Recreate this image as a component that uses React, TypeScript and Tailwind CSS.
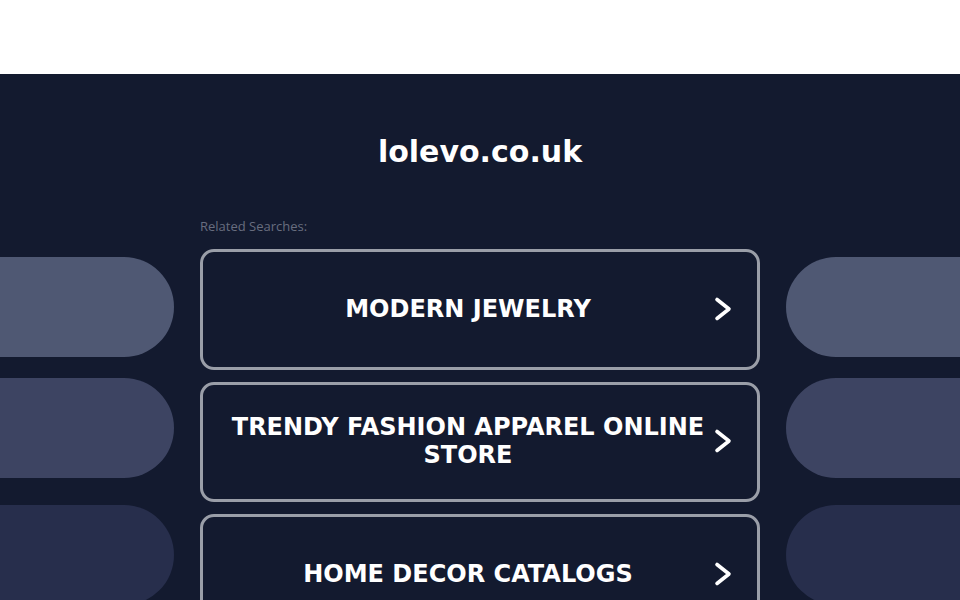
import React from "react";

const items = ["MODERN JEWELRY", "TRENDY FASHION APPAREL ONLINE STORE", "HOME DECOR CATALOGS"];

function Chevron() {
  return (
    <svg width="20" height="28" viewBox="0 0 20 28" className="shrink-0">
      <polyline points="4,4.5 16,14 4,23.5" fill="none" stroke="#ffffff" strokeWidth="3.6" strokeLinecap="round" strokeLinejoin="round" />
    </svg>
  );
}

export default function App() {
  return (
    <div className="h-[600px] w-full overflow-hidden bg-[#131a2f]" style={{ fontFamily: "'DejaVu Sans', sans-serif" }}>
      <div className="h-[74px] bg-white" />
      <div className="flex flex-col">
        <h1 className="pt-[60px] text-center text-[30px] leading-[36px] font-bold text-white">lolevo.co.uk</h1>
        <div className="mt-[48px] flex">
          <div className="flex w-[174px] flex-col">
            <div className="mt-[39px] h-[100px] rounded-r-full bg-[#4f5873]" />
            <div className="mt-[21px] h-[100px] rounded-r-full bg-[#3d4462]" />
            <div className="mt-[27px] h-[100px] rounded-r-full bg-[#272e4c]" />
          </div>
          <div className="ml-[26px] flex w-[560px] flex-col">
            <div className="text-[13px] leading-[16px] text-[#686d7f]" style={{ fontFamily: "'Open Sans', sans-serif" }}>
              Related Searches:
            </div>
            <div className="mt-[15px] flex flex-col gap-3">
              {items.map((t) => (
                <div key={t} className="flex h-[120.5px] items-center rounded-[14px] border-[3px] border-[#9a9ea8] pb-[1px] pl-5 pr-6">
                  <span className="flex-1 text-center text-[24px] leading-[28px] font-bold text-white">{t}</span>
                  <Chevron />
                </div>
              ))}
            </div>
          </div>
          <div className="ml-[26px] flex flex-1 flex-col">
            <div className="mt-[39px] h-[100px] rounded-l-full bg-[#4f5873]" />
            <div className="mt-[21px] h-[100px] rounded-l-full bg-[#3d4462]" />
            <div className="mt-[27px] h-[100px] rounded-l-full bg-[#272e4c]" />
          </div>
        </div>
      </div>
    </div>
  );
}
